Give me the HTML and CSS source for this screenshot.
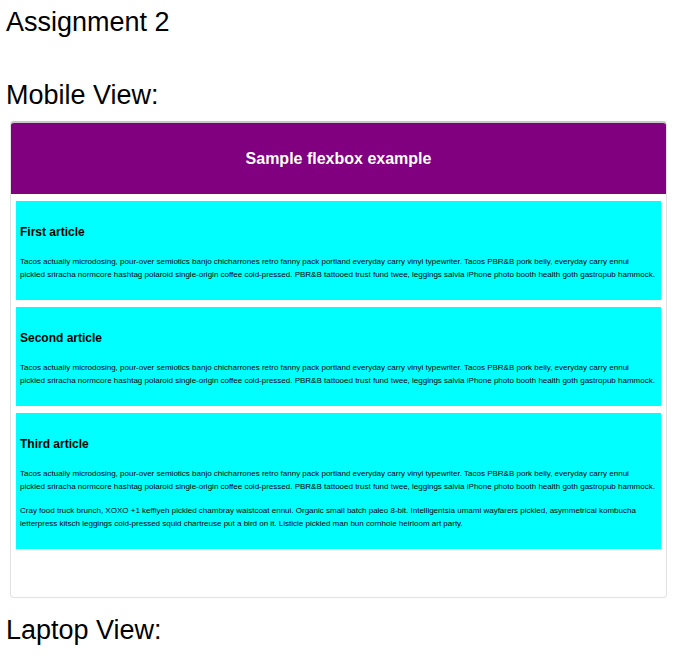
FILE: index.html
```html
<!DOCTYPE html>
<html lang="en">
<head>
<meta charset="utf-8">
<meta name="viewport" content="width=device-width, initial-scale=1">
<title>Assignment 2</title>
<link rel="stylesheet" href="styles.css">
</head>
<body>
<h1 class="title">Assignment 2</h1>
<h2 class="view-title">Mobile View:</h2>
<main class="preview">
  <header class="banner"><h3 class="banner-title">Sample flexbox example</h3></header>
  <section class="articles">
    <article class="article">
      <h4 class="article-title">First article</h4>
      <p class="text">Tacos actually microdosing, pour-over semiotics banjo chicharrones retro fanny pack portland everyday carry vinyl typewriter. Tacos PBR&amp;B pork belly, everyday carry ennui<br>pickled sriracha normcore hashtag polaroid single-origin coffee cold-pressed. PBR&amp;B tattooed trust fund twee, leggings salvia iPhone photo booth health goth gastropub hammock.</p>
    </article>
    <article class="article">
      <h4 class="article-title">Second article</h4>
      <p class="text">Tacos actually microdosing, pour-over semiotics banjo chicharrones retro fanny pack portland everyday carry vinyl typewriter. Tacos PBR&amp;B pork belly, everyday carry ennui<br>pickled sriracha normcore hashtag polaroid single-origin coffee cold-pressed. PBR&amp;B tattooed trust fund twee, leggings salvia iPhone photo booth health goth gastropub hammock.</p>
    </article>
    <article class="article">
      <h4 class="article-title">Third article</h4>
      <p class="text">Tacos actually microdosing, pour-over semiotics banjo chicharrones retro fanny pack portland everyday carry vinyl typewriter. Tacos PBR&amp;B pork belly, everyday carry ennui<br>pickled sriracha normcore hashtag polaroid single-origin coffee cold-pressed. PBR&amp;B tattooed trust fund twee, leggings salvia iPhone photo booth health goth gastropub hammock.</p>
      <p class="text">Cray food truck brunch, XOXO +1 keffiyeh pickled chambray waistcoat ennui. Organic small batch paleo 8-bit. Intelligentsia umami wayfarers pickled, asymmetrical kombucha<br>letterpress kitsch leggings cold-pressed squid chartreuse put a bird on it. Listicle pickled man bun cornhole heirloom art party.</p>
    </article>
  </section>
</main>
<h2 class="view-title">Laptop View:</h2>
</body>
</html>
```
FILE: styles.css
```css
body {
  margin: 0;
  padding: 6px 10px 10px 6px;
  background: #fff;
  color: #000;
  font-family: "Liberation Sans", Arial, sans-serif;
}

.title,
.view-title {
  margin: 0;
  font-size: 27px;
  font-weight: 400;
  line-height: 32px;
}

.title {
  margin-bottom: 41px;
}

.preview {
  margin: 10px 0 16px 4px;
  padding-bottom: 48px;
  border: 1px solid #e2e2e2;
  border-top: 2px solid #c8c8c8;
  border-radius: 4px;
  overflow: hidden;
}

.banner {
  padding: 22px 10px;
  background: #800080;
  color: #fff;
  text-align: center;
}

.banner-title {
  margin: 0;
  font-size: 16px;
  line-height: 27px;
}

.articles {
  display: flex;
  flex-direction: column;
  gap: 7px;
  padding: 7px 5px 0;
}

.article {
  padding: 21px 4px 19px;
  background: #0ff;
}

.article-title {
  margin: 0 0 13px;
  font-size: 12px;
  line-height: 20px;
}

.text {
  margin: 0;
  font-size: 8px;
  line-height: 13px;
}

.text + .text {
  margin-top: 11px;
}
```
